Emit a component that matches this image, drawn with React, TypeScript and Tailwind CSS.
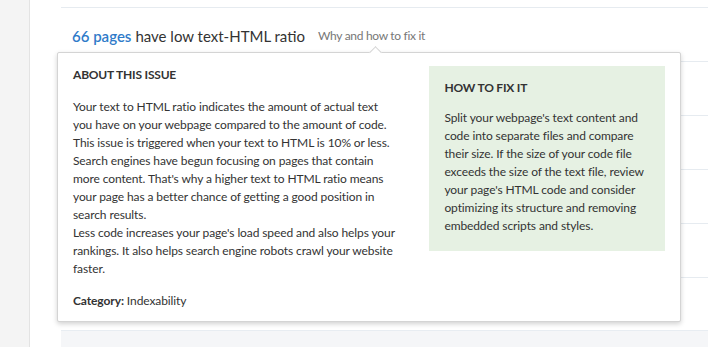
import React from "react";

const rowLines = [0, 1, 2, 3];

export default function App() {
  return (
    <div
      className="flex h-[347px] w-[708px] overflow-hidden bg-white text-[#333]"
      style={{ fontFamily: "Lato, 'Noto Sans', sans-serif" }}
    >
      <div className="w-[30px] shrink-0 border-r border-[#e3e3e3] bg-[#f4f4f4]" />

      <div className="relative flex flex-1 flex-col pl-[31px] pt-[7px]">
        <div className="flex h-[54px] items-center border-t border-[#e6ebf0] pl-[11px] pt-[3px]">
          <span className="text-[15px] font-semibold text-[#2f7bc9]">66 pages</span>
          <span className="ml-[4px] text-[15px] text-[#333]">
            have low text-HTML ratio
          </span>
          <span className="ml-[13px] text-[12px] tracking-[-0.3px] text-[#777]">
            Why and how to fix it
          </span>
        </div>

        {rowLines.map((row) => (
          <div key={row} className="h-[54px] border-t border-[#e6ebf0]" />
        ))}
        <div className="h-[53px] border-t border-[#e6ebf0]" />

        <div className="flex-1 border-t border-[#e8edf2] bg-[#f5f6f8]" />

        {/* popup */}
        <div className="absolute left-[27px] top-[52px] h-[270px] w-[624px] rounded-[2px] border border-[#d4d4d4] bg-white shadow-[0_2px_5px_rgba(0,0,0,0.18)]">
          <div className="absolute left-[313px] top-[-5px] h-[9px] w-[9px] rotate-45 border-l border-t border-[#d4d4d4] bg-white" />

          <div className="flex gap-[30px] px-[15px] pt-[13px]">
            <div className="w-[327px]">
              <h3 className="text-[12px] font-bold tracking-[-0.2px] text-[#333]">
                ABOUT THIS ISSUE
              </h3>
              <p className="mt-[14px] text-[12px] leading-[18px] tracking-[-0.1px] text-[#333]">
                Your text to HTML ratio indicates the amount of actual text you
                have on your webpage compared to the amount of code. This issue
                is triggered when your text to HTML is 10% or less. Search
                engines have begun focusing on pages that contain more content.
                That's why a higher text to HTML ratio means your page has a
                better chance of getting a good position in search results.
                <br />
                Less code increases your page's load speed and also helps your
                rankings. It also helps search engine robots crawl your website
                faster.
              </p>
              <p className="mt-[14px] text-[12px] tracking-[-0.1px] text-[#333]">
                <span className="font-bold">Category:</span> Indexability
              </p>
            </div>

            <div className="h-[185px] w-[236px] bg-[#e6f1e3] px-[15px] pt-[13px]">
              <h3 className="text-[12px] font-bold tracking-[-0.2px] text-[#333]">
                HOW TO FIX IT
              </h3>
              <p className="mt-[12px] text-[12px] leading-[18px] tracking-[-0.1px] text-[#333]">
                Split your webpage's text content and code into separate files
                and compare their size. If the size of your code file exceeds
                the size of the text file, review your page's HTML code and
                consider optimizing its structure and removing embedded scripts
                and styles.
              </p>
            </div>
          </div>
        </div>
      </div>
    </div>
  );
}
